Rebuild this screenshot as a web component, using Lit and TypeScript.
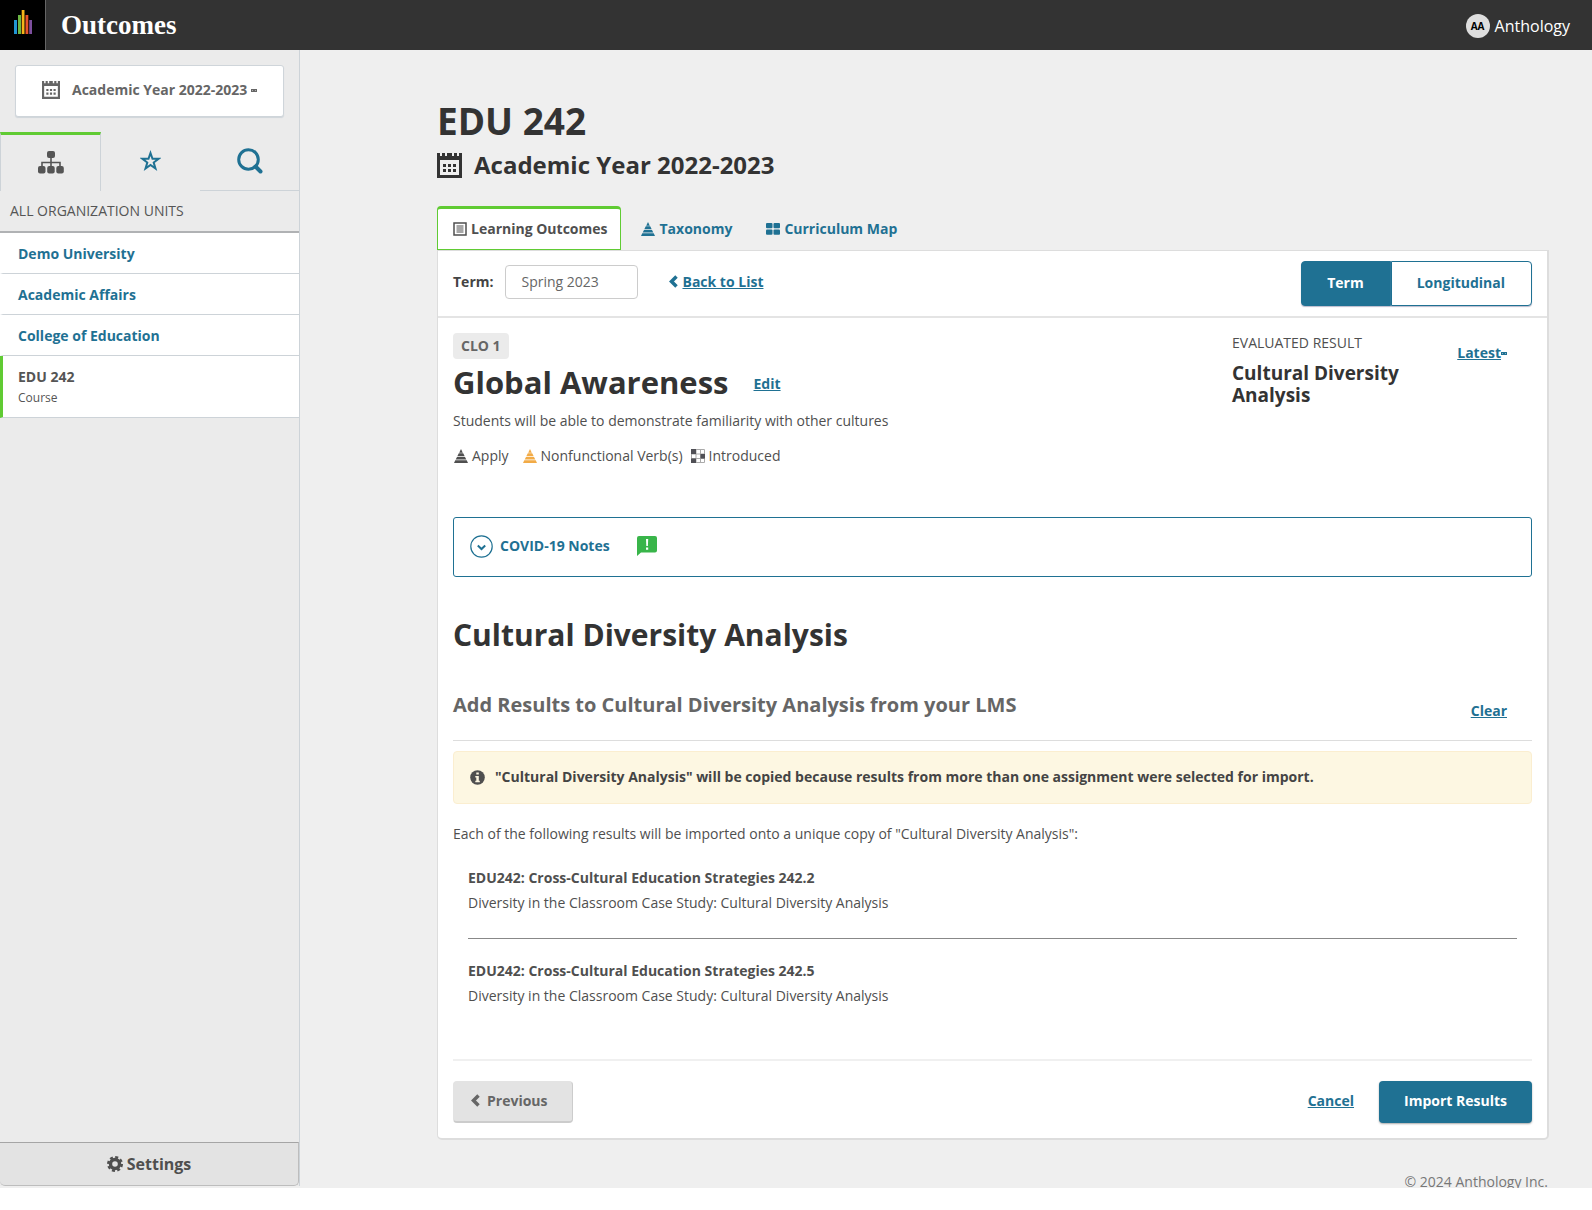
import { LitElement, html, css } from "lit";
import { customElement } from "lit/decorators.js";

const calendar = (size: number) => html`<svg class="icon" width=${size} height=${size} viewBox="0 0 25 25" fill="currentColor" aria-hidden="true">
  <path d="M0 0h3v3h2V0h3v3h2V0h5v3h2V0h3v3h2V0h3v25H0zM3 7v15h19V7z" fill-rule="evenodd"/>
  <path d="M6 11h3v3H6zM11 11h3v3h-3zM16 11h3v3h-3zM6 16h3v3H6zM11 16h3v3h-3zM16 16h3v3h-3z"/>
</svg>`;

const pyramid = html`<svg class="icon" width="14" height="14" viewBox="0 0 14 14" fill="currentColor" aria-hidden="true">
  <path d="M7 0l1.800 3.700H5.200zM4.800 4.300h4.400l1.500 2.900H3.300zM3 7.900h8l1.300 2.700H1.700zM1.300 11.300h11.400L14 14H0z"/>
</svg>`;

const chevronLeft = html`<svg class="icon" width="9" height="13" viewBox="0 0 9 13" aria-hidden="true">
  <path d="M7.500 1.500l-5 5 5 5" fill="none" stroke="currentColor" stroke-width="3.500"/>
</svg>`;

const marker = html`<svg class="icon" width="6" height="3" viewBox="0 0 6 3" aria-hidden="true">
  <path d="M0 0h6v3H0z" fill="currentColor"/><path d="M1 1h1v1H1zM4 1h1v1H4z" fill="#fff" opacity=".5"/>
</svg>`;

const units = ["Demo University", "Academic Affairs", "College of Education"];
const results = [
  { title: "EDU242: Cross-Cultural Education Strategies 242.2", text: "Diversity in the Classroom Case Study: Cultural Diversity Analysis" },
  { title: "EDU242: Cross-Cultural Education Strategies 242.5", text: "Diversity in the Classroom Case Study: Cultural Diversity Analysis" },
];

@customElement("app-root")
export class AppRoot extends LitElement {
  static styles = css`
    :host { display: block; font-family: "Open Sans", sans-serif; font-size: 14px; line-height: 20px; color: #4f4f4f; background: #efefef; }
    * { box-sizing: border-box; }
    h1, h2, h3, h4, p, ul { margin: 0; padding: 0; }
    ul { list-style: none; }
    a { color: #1f7193; font-weight: 700; }
    button { font: inherit; font-weight: 700; cursor: pointer; margin: 0; }
    .icon { flex: none; display: block; }
    .top { display: flex; align-items: center; height: 50px; background: #333; color: #fff; padding-right: 22px; }
    .logo { display: flex; align-items: center; justify-content: center; width: 46px; height: 50px; padding-bottom: 6px; background: #000; border-right: 1px solid #666; }
    .brand { flex: 1; padding-left: 15px; font: 700 27px/50px "Liberation Serif", serif; }
    .user { display: flex; align-items: center; gap: 5px; padding-top: 2px; font-size: 16px; }
    .avatar { width: 24px; height: 24px; border-radius: 50%; background: #dedede; color: #000; font-size: 10px; line-height: 24px; font-weight: 700; text-align: center; }
    .body { display: flex; }
    .side { flex: none; display: flex; flex-direction: column; width: 300px; background: #ebebeb; border-right: 1px solid #cdd3d8; margin-bottom: 2px; }
    .year { display: flex; align-items: center; margin: 15px; height: 52px; padding: 0 16px 2px 26px; background: #fff; border: 1px solid #cfd5da; border-radius: 3px; box-shadow: 0 1px 1px #cfd5da; color: #666; white-space: nowrap; }
    .year span { margin-left: 12px; margin-right: 4px; }
    .tabs { display: grid; grid-template-columns: 101px 99px 1fr; height: 59px; margin-bottom: 1px; }
    .tabs button { display: flex; align-items: center; justify-content: center; background: none; border: 0; padding: 0 0 1px; color: #1f7193; }
    .tabs .on { border: 1px solid #cdd3d8; border-top: 3px solid #60cb33; border-bottom: 0; color: #555; }
    .tabs .last { border-bottom: 1px solid #cdd3d8; }
    .cap { height: 41px; padding-left: 10px; line-height: 38px; font-size: 14px; font-weight: 400; color: #555; border-bottom: 2px solid #b0b2b4; }
    .units li { background: #fff; border-left: 3px solid #fff; border-bottom: 1px solid #cdd3d8; height: 41px; padding: 11px 15px 0; }
    .units a { text-decoration: none; }
    .units .current { height: 62px; border-left-color: #60cb33; color: #555; }
    .units small { display: block; font-size: 12px; line-height: 22px; }
    .settings { display: flex; align-items: center; justify-content: center; gap: 4px; margin-top: auto; height: 44px; background: #e3e3e3; border: 1px solid #bdbdbd; border-left: 0; border-top-color: #a5a5a5; border-radius: 0 0 5px 5px; color: #4f4f4f; font-size: 16px; }
    .main { flex: 1; min-width: 0; padding: 44px 43px 0 137px; }
    h1 { font-size: 37px; line-height: 54px; color: #333; }
    .sub { display: flex; align-items: center; gap: 12px; font-size: 24px; line-height: 34px; color: #333; font-weight: 700; }
    .nav { display: flex; margin-top: 24px; height: 44px; }
    .nav a { display: flex; align-items: center; gap: 4px; padding: 0 16px; text-decoration: none; }
    .nav a + a { padding: 2px 14px 0 20px; }
    .nav .on { background: #fff; color: #4f4f4f; border: 1px solid #60cb33; border-top-width: 3px; border-radius: 4px 4px 0 0; padding: 0 13px 0 15px; }
    .panel { background: #fff; border: 1px solid #ddd; border-right-width: 2px; border-bottom-width: 2px; border-radius: 0 0 5px 5px; }
    .bar { display: flex; align-items: center; height: 67px; padding: 0 15px 4px; border-bottom: 2px solid #e4e4e4; }
    .bar label { font-weight: 700; color: #444; margin-right: 12px; }
    .bar select { appearance: none; width: 133px; height: 34px; padding: 0 15px; background: #fff; border: 1px solid #ccc; border-radius: 4px; font: inherit; color: #666; }
    .back { display: flex; align-items: center; gap: 4px; margin-left: 31px; color: #1f7193; }
    .toggle { display: flex; margin: 4px 0 0 auto; }
    .toggle button { height: 45px; padding: 0 26px 2px 25px; background: #fff; color: #1f7193; border: 1px solid #1f7193; border-radius: 0 4px 4px 0; box-shadow: 0 1px 1px #bbc; }
    .toggle .on { background: #1f7193; color: #fff; border-radius: 4px 0 0 4px; }
    .content { padding: 15px; }
    .intro { display: flex; height: 184px; }
    .about { flex: 1; }
    .badge { display: inline-block; height: 26px; padding: 0 8px; border-radius: 4px; background: #ebebeb; color: #666; font-weight: 700; line-height: 26px; vertical-align: top; }
    .title { display: flex; align-items: center; gap: 25px; height: 46px; }
    .title h2 { font-size: 31px; }
    .title a { padding-top: 4px; }
    h2 { font-size: 30px; line-height: 46px; color: #333; }
    .about p { line-height: 32px; }
    .tags { display: flex; height: 38px; align-items: center; }
    .tags li { display: flex; align-items: center; gap: 4px; }
    .apply { padding: 0 14px 0 1px; }
    .verb { margin-right: 8px; }
    .verb svg { color: #f2ab46; }
    .eval { width: 206px; }
    .eval h4 { font-weight: 400; }
    .eval p { width: 180px; padding-top: 9px; font-size: 19px; line-height: 22px; font-weight: 700; color: #333; }
    .latest { display: flex; align-items: center; align-self: flex-start; justify-content: flex-end; width: 94px; margin-top: 10px; padding-right: 25px; color: #1f7193; }
    .covid { display: flex; align-items: center; width: 100%; height: 60px; padding: 0 16px 2px; background: #fff; border: 1px solid #1f7193; border-radius: 3px; color: #1f7193; text-align: left; }
    .covid span { margin: 0 27px 0 7px; }
    .analysis { margin-top: 35px; }
    .add { display: flex; align-items: center; justify-content: space-between; height: 83px; border-bottom: 1px solid #ddd; padding: 11px 25px 0 0; }
    .add h3 { font-size: 20px; color: #666; }
    .add a { padding-top: 12px; }
    .alert { display: flex; align-items: center; gap: 10px; margin-top: 10px; height: 53px; padding: 0 16px 1px; background: #fdf7e2; border: 1px solid #fbeed0; border-radius: 4px; font-weight: 700; color: #444; }
    .each { padding: 20px 0 21px; }
    .results { padding: 0 15px 26px; }
    .results li { height: 73px; }
    .results li + li { border-top: 1px solid #888; padding-top: 19px; height: 95px; }
    .results h4, .results p { line-height: 25px; }
    .actions { display: flex; align-items: center; justify-content: space-between; border-top: 2px solid #f0f0f0; padding-top: 20px; }
    .actions div { display: flex; align-items: center; gap: 25px; }
    .actions a { padding-bottom: 2px; }
    .prev, .import { display: flex; align-items: center; gap: 7px; height: 42px; border-radius: 4px; }
    .prev { padding: 0 25px 2px 17px; background: #e3e3e3; color: #666; border: 1px solid #e3e3e3; border-right-color: #ccc; border-bottom: 2px solid #ccc; }
    .import { padding: 0 25px 2px; background: #1f7193; color: #fff; border: 0; box-shadow: 0 1px 2px #aaa; }
    .foot { height: 48px; padding: 32px 1px 0 0; text-align: right; color: #777; }
  `;

  render() {
    return html`
      <header class="top">
        <div class="logo">
          <svg width="18" height="24" viewBox="0 0 18 24" role="img" aria-label="Anthology">
            <path fill="#2196d3" d="M0 10h3v14H0z"/><path fill="#6cb744" d="M4 5h3v19H4z"/><path fill="#f7b519" d="M7.700 0h2.800v24H7.700z"/><path fill="#e8532a" d="M11.500 5h2.800v19h-2.800z"/><path fill="#7d4f9e" d="M15.200 10H18v14h-2.800z"/>
          </svg>
        </div>
        <div class="brand">Outcomes</div>
        <div class="user"><span class="avatar">AA</span>Anthology</div>
      </header>
      <div class="body">
        <aside class="side">
          <button class="year">${calendar(18)}<span>Academic Year 2022-2023</span>${marker}</button>
          <div class="tabs">
            <button class="on" aria-label="Organization">
              <svg width="26" height="23" viewBox="0 0 26 23" fill="currentColor"><rect x="9" y="0" width="8" height="7" rx="2"/><rect x="0" y="15" width="7.500" height="7.500" rx="2"/><rect x="9.200" y="15" width="7.500" height="7.500" rx="2"/><rect x="18.300" y="15" width="7.500" height="7.500" rx="2"/><path d="M4 16v-4.500h18V16M13 6v10" fill="none" stroke="currentColor" stroke-width="1.600"/></svg>
            </button>
            <button aria-label="Favorites">
              <svg width="21" height="22" viewBox="0 0 21 22" fill="none" stroke="currentColor" stroke-width="2"><path d="M10.500 3l2 5.800h6l-4.800 3.700 1.800 6.100-5-3.600-5 3.600 1.800-6.100L2.500 8.800h6z"/></svg>
            </button>
            <button class="last" aria-label="Search">
              <svg width="26" height="26" viewBox="0 0 26 26" fill="none" stroke="currentColor"><circle cx="11.500" cy="11.500" r="9.800" stroke-width="3"/><path d="M18.500 18.500l5 5" stroke-width="4" stroke-linecap="round"/></svg>
            </button>
          </div>
          <h4 class="cap">ALL ORGANIZATION UNITS</h4>
          <ul class="units">
            ${units.map((u) => html`<li><a href="#">${u}</a></li>`)}
            <li class="current"><b>EDU 242</b><small>Course</small></li>
          </ul>
          <button class="settings">
            <svg class="icon" width="16" height="16" viewBox="0 0 16 16" fill="none" stroke="currentColor"><circle cx="8" cy="8" r="4.500" stroke-width="3.400"/><circle cx="8" cy="8" r="6.800" stroke-width="2.400" stroke-dasharray="3 2.340"/></svg>
            Settings
          </button>
        </aside>
        <main class="main">
          <h1>EDU 242</h1>
          <div class="sub">${calendar(25)}Academic Year 2022-2023</div>
          <nav class="nav">
            <a class="on" href="#"><svg class="icon" width="14" height="14" viewBox="0 0 14 14"><path d="M1 1h12v12H1z" fill="none" stroke="currentColor" stroke-width="1.500"/><path d="M3.500 4h7M3.500 6h7M3.500 8h7M3.500 10h7" stroke="currentColor"/></svg>Learning Outcomes</a>
            <a href="#">${pyramid}Taxonomy</a>
            <a href="#"><svg class="icon" width="14" height="12" viewBox="0 0 14 12" fill="currentColor"><rect width="6.500" height="5.300" rx="1"/><rect x="7.500" width="6.500" height="5.300" rx="1"/><rect y="6.500" width="6.500" height="5.300" rx="1"/><rect x="7.500" y="6.500" width="6.500" height="5.300" rx="1"/></svg>Curriculum Map</a>
          </nav>
          <section class="panel">
            <div class="bar">
              <label for="term">Term:</label>
              <select id="term"><option>Spring 2023</option></select>
              <div class="back">${chevronLeft}<a href="#">Back to List</a></div>
              <div class="toggle"><button class="on">Term</button><button>Longitudinal</button></div>
            </div>
            <div class="content">
              <div class="intro">
                <div class="about">
                  <span class="badge">CLO 1</span>
                  <div class="title"><h2>Global Awareness</h2><a href="#">Edit</a></div>
                  <p>Students will be able to demonstrate familiarity with other cultures</p>
                  <ul class="tags">
                    <li class="apply">${pyramid}Apply</li>
                    <li class="verb">${pyramid}Nonfunctional Verb(s)</li>
                    <li><svg class="icon" width="14" height="14" viewBox="0 0 14 14"><path d="M.5.5h13v13H.5zM5 .5v13M9.500.5v13M.5 5h13M.5 9.500h13" fill="none" stroke="#aaa"/><path d="M0 0h5v5H0zM9.500 5H14v4.500H9.500zM0 9.500h5V14H0z" fill="#4f4f55"/></svg>Introduced</li>
                  </ul>
                </div>
                <div class="eval"><h4>EVALUATED RESULT</h4><p>Cultural Diversity Analysis</p></div>
                <div class="latest"><a href="#">Latest</a>${marker}</div>
              </div>
              <button class="covid">
                <svg class="icon" width="23" height="23" viewBox="0 0 23 23" fill="none" stroke="currentColor"><circle cx="11.500" cy="11.500" r="10.700" stroke-width="1.200"/><path d="M7.800 10.500l3.700 3.500 3.700-3.500" stroke-width="2"/></svg>
                <span>COVID-19 Notes</span>
                <svg class="icon" width="20" height="20" viewBox="0 0 20 20"><path d="M2 0h16q2 0 2 2v12.500q0 2-2 2H4L0 20V2q0-2 2-2z" fill="#39b54a"/><path d="M9 3h2.200l-.3 7H9.300zM9 11.500h2.200v2.200H9z" fill="#fff"/></svg>
              </button>
              <h2 class="analysis">Cultural Diversity Analysis</h2>
              <div class="add"><h3>Add Results to Cultural Diversity Analysis from your LMS</h3><a href="#">Clear</a></div>
              <div class="alert">
                <svg class="icon" width="15" height="15" viewBox="0 0 15 15"><circle cx="7.500" cy="7.500" r="7.300" fill="#4f4f4f"/><path d="M6.300 2.500h2.500v2H6.300zM5.300 6h3.500v4.800h1V12.300H5.300v-1.500h1V7.500h-1z" fill="#fcf6e1"/></svg>
                "Cultural Diversity Analysis" will be copied because results from more than one assignment were selected for import.
              </div>
              <p class="each">Each of the following results will be imported onto a unique copy of "Cultural Diversity Analysis":</p>
              <ul class="results">${results.map((r) => html`<li><h4>${r.title}</h4><p>${r.text}</p></li>`)}</ul>
              <div class="actions">
                <button class="prev">${chevronLeft}Previous</button>
                <div><a href="#">Cancel</a><button class="import">Import Results</button></div>
              </div>
            </div>
          </section>
          <footer class="foot">© 2024 Anthology Inc.</footer>
        </main>
      </div>
    `;
  }
}
